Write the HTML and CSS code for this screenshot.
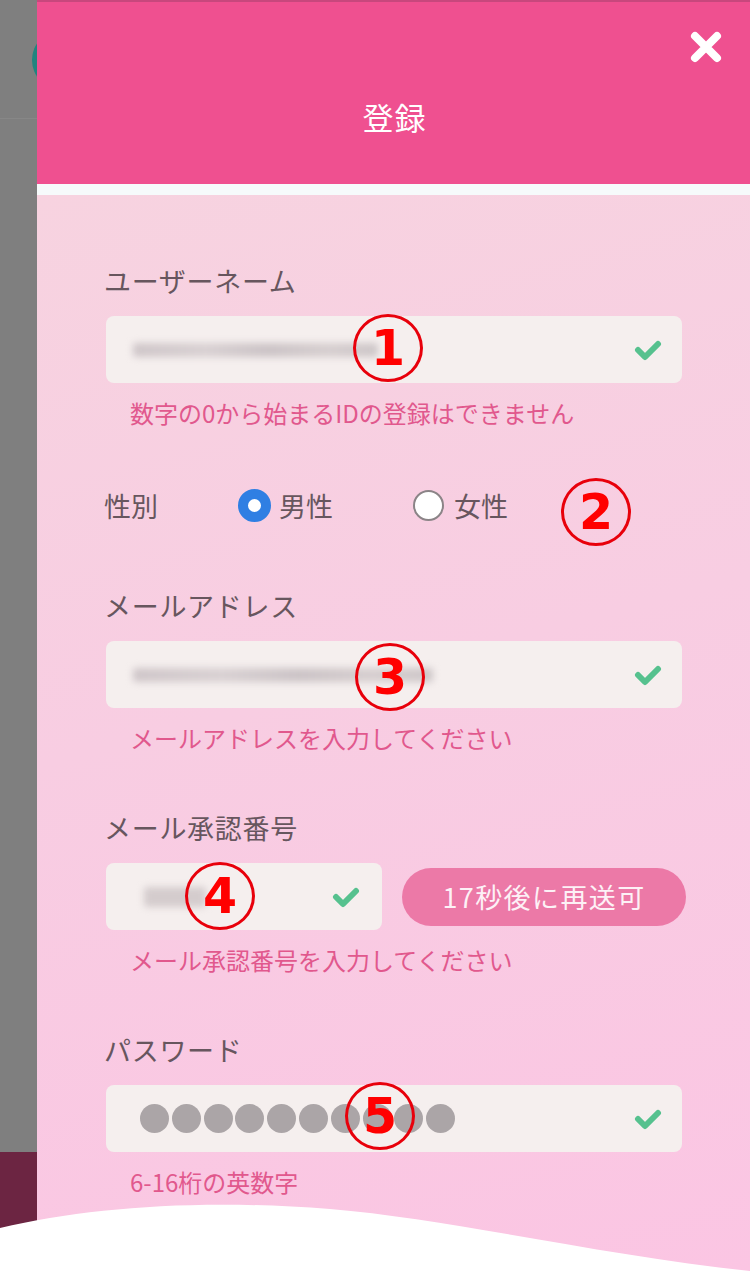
FILE: index.html
```html
<!DOCTYPE html>
<html lang="ja">
<head>
<meta charset="utf-8">
<title>登録</title>
<link rel="stylesheet" href="styles.css">
</head>
<body>
<div class="page">
  <div class="backdrop">
    <div class="backdrop-top">
      <div class="teal-dot"></div>
      <div class="backdrop-line"></div>
    </div>
    <div class="backdrop-bottom"></div>
  </div>

  <div class="panel">
    <header class="panel-header">
      <h1 class="title">登録</h1>
      <button class="close" aria-label="閉じる">
        <svg width="32" height="32" viewBox="0 0 32 32"><path d="M5 5 L27 27 M27 5 L5 27" stroke="#fff" stroke-width="8" stroke-linecap="round"/></svg>
      </button>
    </header>
    <div class="band"></div>
    <main class="form">
      <section class="field">
        <div class="label">ユーザーネーム</div>
        <div class="input">
          <span class="blur blur-user"></span>
          <svg class="check" width="28" height="22" viewBox="0 0 28 22"><path d="M4 11 L11 18 L24 5" fill="none" stroke="#56c18e" stroke-width="6" stroke-linecap="round" stroke-linejoin="round"/></svg>
        </div>
        <div class="hint">数字の0から始まるIDの登録はできません</div>
      </section>

      <section class="gender">
        <span class="gender-label">性別</span>
        <span class="radio radio-on"></span>
        <span class="radio-text">男性</span>
        <span class="radio radio-off"></span>
        <span class="radio-text">女性</span>
      </section>

      <section class="field field-mail">
        <div class="label">メールアドレス</div>
        <div class="input">
          <span class="blur blur-mail"></span>
          <svg class="check" width="28" height="22" viewBox="0 0 28 22"><path d="M4 11 L11 18 L24 5" fill="none" stroke="#56c18e" stroke-width="6" stroke-linecap="round" stroke-linejoin="round"/></svg>
        </div>
        <div class="hint">メールアドレスを入力してください</div>
      </section>

      <section class="field field-next">
        <div class="label">メール承認番号</div>
        <div class="code-row">
          <div class="input input-code">
            <span class="blur blur-code"></span>
            <svg class="check" width="28" height="22" viewBox="0 0 28 22"><path d="M4 11 L11 18 L24 5" fill="none" stroke="#56c18e" stroke-width="6" stroke-linecap="round" stroke-linejoin="round"/></svg>
          </div>
          <button class="resend">17秒後に再送可</button>
        </div>
        <div class="hint">メール承認番号を入力してください</div>
      </section>

      <section class="field field-next">
        <div class="label">パスワード</div>
        <div class="input">
          <span class="dots">
            <i></i><i></i><i></i><i></i><i></i><i></i><i></i><i></i><i></i><i></i>
          </span>
          <svg class="check" width="28" height="22" viewBox="0 0 28 22"><path d="M4 11 L11 18 L24 5" fill="none" stroke="#56c18e" stroke-width="6" stroke-linecap="round" stroke-linejoin="round"/></svg>
        </div>
        <div class="hint">6-16桁の英数字</div>
      </section>
    </main>
  </div>

  <div class="mark mark-1">1</div>
  <div class="mark mark-2">2</div>
  <div class="mark mark-3">3</div>
  <div class="mark mark-4">4</div>
  <div class="mark mark-5">5</div>

  <svg class="wave" width="750" height="80" viewBox="0 0 750 80" preserveAspectRatio="none">
    <path d="M0 35 C 90 14, 200 6, 330 16 C 450 26, 600 62, 750 78 L750 80 L0 80 Z" fill="#ffffff"/>
  </svg>
</div>
</body>
</html>
```

FILE: styles.css
```css
* { box-sizing: border-box; }

html, body {
  margin: 0;
  padding: 0;
}

body {
  font-family: "Noto Sans CJK JP", "Noto Sans", sans-serif;
  background: #ffffff;
}

.page {
  position: relative;
  width: 750px;
  height: 1273px;
  overflow: hidden;
  display: flex;
}

/* left dimmed backdrop */
.backdrop {
  width: 37px;
  flex-shrink: 0;
  display: flex;
  flex-direction: column;
  overflow: hidden;
}

.backdrop-top {
  flex: 1;
  background: #7f7f7f;
  display: flex;
  flex-direction: column;
  align-items: flex-start;
}

.teal-dot {
  flex-shrink: 0;
  width: 60px;
  height: 60px;
  margin: 30px 0 0 32px;
  border-radius: 50%;
  background: #21847f;
}

.backdrop-line {
  width: 100%;
  height: 1px;
  margin-top: 28px;
  background: #878787;
}

.backdrop-bottom {
  height: 121px;
  background: #6c2542;
}

/* panel */
.panel {
  flex: 1;
  display: flex;
  flex-direction: column;
}

.panel-header {
  position: relative;
  height: 184px;
  border-top: 2px solid #c8477d;
  background: #ef5090;
  padding-top: 95px;
  text-align: center;
}

.title {
  margin: 0;
  font-size: 31px;
  line-height: 40px;
  font-weight: 400;
  color: #ffffff;
  letter-spacing: 1px;
  padding-left: 2px;
}

.close {
  position: absolute;
  top: 29px;
  right: 28px;
  width: 32px;
  height: 32px;
  padding: 0;
  border: 0;
  background: none;
  display: block;
}

.close svg { display: block; }

.band {
  height: 11px;
  background: #f6fafb;
}

.form {
  flex: 1;
  padding: 68px 68px 0 67px;
  background: linear-gradient(165deg, #f7d3e0 0%, #f8cde2 45%, #fbc5e3 100%);
}

.field {
  display: flex;
  flex-direction: column;
}

.label {
  font-size: 27px;
  line-height: 36px;
  color: #67565e;
  letter-spacing: 0.7px;
  margin-bottom: 17px;
}

.input {
  height: 67px;
  margin-left: 2px;
  border-radius: 8px;
  background: #f5efee;
  display: flex;
  align-items: center;
  justify-content: space-between;
  padding: 0 20px 0 27px;
}

.check { display: block; flex-shrink: 0; }

.blur {
  display: block;
  height: 14px;
  border-radius: 3px;
  filter: blur(3.5px);
  background: linear-gradient(90deg, #cfc6c9 0%, #d8d0d2 30%, #cbc3c6 55%, #d6cecf 80%, #cdc6c8 100%);
}

.blur-user { width: 245px; }
.blur-mail { width: 300px; }
.blur-code { width: 62px; height: 20px; margin-left: 8px; background: #d4cccd; }

.hint {
  margin-top: 14px;
  padding-left: 26px;
  font-size: 24px;
  line-height: 32px;
  color: #e1588d;
}

/* gender */
.gender {
  display: flex;
  align-items: center;
  height: 40px;
  margin-top: 56px;
  margin-bottom: 63px;
  font-size: 27px;
  color: #67565e;
}

.gender-label { margin-right: 80px; }

.radio {
  flex-shrink: 0;
  border-radius: 50%;
  background: #ffffff;
}

.radio-on {
  width: 33px;
  height: 33px;
  border: 10px solid #2f7fe3;
  margin-right: 8px;
}

.radio-off {
  width: 31px;
  height: 31px;
  border: 2.5px solid #8b8487;
  margin-left: 80px;
  margin-right: 10px;
}

.field-next { margin-top: 56px; }

/* code row */
.code-row {
  display: flex;
  align-items: center;
  gap: 20px;
  margin-right: -4px;
}

.input-code {
  width: 276px;
  flex-shrink: 0;
  padding-right: 22px;
  padding-left: 30px;
}

.resend {
  flex: 1;
  height: 58px;
  border: 0;
  border-radius: 29px;
  background: #ec79a7;
  color: #fdf1f6;
  font-family: "Noto Sans CJK JP", "Noto Sans", sans-serif;
  font-size: 27px;
  letter-spacing: 1.4px;
  line-height: 58px;
  padding: 0;
}

/* password dots */
.dots {
  display: flex;
  gap: 2.8px;
  margin-left: 7px;
}

.dots i {
  display: block;
  width: 29px;
  height: 29px;
  border-radius: 50%;
  background: #aba5a7;
}

/* annotation marks */
.mark {
  position: absolute;
  width: 70px;
  height: 68px;
  border: 3px solid #e8000b;
  border-radius: 50%;
  display: flex;
  align-items: center;
  justify-content: center;
  font-family: "DejaVu Sans", "Liberation Sans", sans-serif;
  font-weight: 700;
  font-size: 49px;
  line-height: 1;
  color: #ff0000;
}

.mark-1 { left: 353px; top: 314px; }
.mark-2 { left: 561px; top: 478px; }
.mark-3 { left: 355px; top: 643px; }
.mark-4 { left: 185px; top: 862px; }
.mark-5 { left: 345px; top: 1082px; }

.wave {
  position: absolute;
  left: 0;
  bottom: 0;
  display: block;
}
```
